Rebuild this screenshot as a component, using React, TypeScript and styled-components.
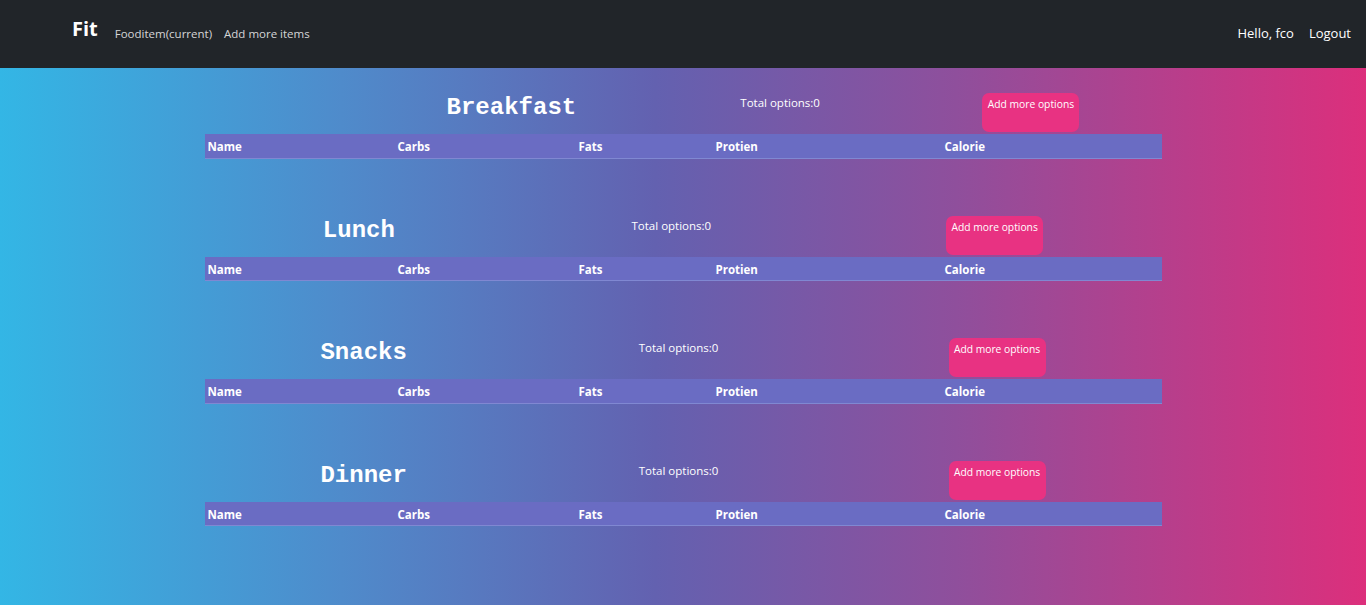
import React from 'react';
import styled, { createGlobalStyle } from 'styled-components';

const GlobalStyle = createGlobalStyle`
  html, body {
    margin: 0;
    padding: 0;
  }
  *, *::before, *::after {
    box-sizing: border-box;
  }
  body {
    font-family: "Open Sans", "Noto Sans", sans-serif;
    color: #fff;
  }
`;

const Page = styled.div`
  min-height: 605px;
  display: flex;
  flex-direction: column;
  background: linear-gradient(to right, #33b6e5 0%, #4f8bcb 25%, #6361b0 48%, #8f4f9c 70%, #dc2f7c 100%);
`;

const NavBar = styled.nav`
  height: 68px;
  background: #212529;
  display: flex;
  align-items: center;
  padding: 0 15px 0 72px;
`;

const Brand = styled.a`
  font-size: 20px;
  font-weight: 700;
  color: #fff;
  margin-right: 17px;
  margin-top: -12px;
`;

const NavLink = styled.a<{ $muted?: boolean }>`
  font-size: ${p => (p.$muted ? '11.5px' : '13px')};
  color: ${p => (p.$muted ? 'rgba(255,255,255,.82)' : '#fff')};
  margin-right: ${p => (p.$muted ? '12px' : '15px')};
  margin-top: -2px;
  &:last-child { margin-right: 0; }
`;

const Spacer = styled.div`
  flex: 1;
`;

const Main = styled.main`
  width: 957px;
  margin: 0 auto;
  padding-top: 25px;
  display: flex;
  flex-direction: column;
  gap: 57px;
`;

const Section = styled.section`
  display: flex;
  flex-direction: column;
`;

const TitleRow = styled.div`
  display: flex;
  justify-content: space-around;
  align-items: flex-start;
  height: 41px;
`;

const MealTitle = styled.h2<{ $shift: number }>`
  margin: 0 0 0 ${p => p.$shift}px;
  font-family: "Liberation Mono", "DejaVu Sans Mono", monospace;
  font-size: 24px;
  font-weight: 700;
  line-height: 29px;
`;

const Total = styled.span`
  font-size: 11.5px;
  line-height: 20px;
  width: 78px;
  white-space: nowrap;
`;

const AddButton = styled.button`
  width: 97px;
  height: 39px;
  border: none;
  border-radius: 7px;
  background: #e83282;
  color: #fff;
  font-family: "Open Sans", "Noto Sans", sans-serif;
  font-size: 10.3px;
  padding: 4px 0 0;
  display: flex;
  justify-content: center;
  align-items: flex-start;
  white-space: nowrap;
`;

const Table = styled.table`
  width: 100%;
  border-collapse: collapse;
  table-layout: fixed;
`;

const HeadRow = styled.tr`
  background: #6a6cc3;
  border-bottom: 1px solid #8088d2;
`;

const Th = styled.th<{ $w: number }>`
  width: ${p => p.$w}px;
  text-align: left;
  font-size: 11.5px;
  font-weight: 700;
  height: 24px;
  padding: 2px 0 0 3px;
  white-space: nowrap;
`;

const columns: [string, number][] = [
  ['Name', 190],
  ['Carbs', 181],
  ['Fats', 137],
  ['Protien', 229],
  ['Calorie', 220],
];

const meals = [
  { name: 'Breakfast', shift: 160 },
  { name: 'Lunch', shift: 0 },
  { name: 'Snacks', shift: 0 },
  { name: 'Dinner', shift: 0 },
];

const MealSection = ({ name, shift }: { name: string; shift: number }) => (
  <Section>
    <TitleRow>
      <MealTitle $shift={shift}>{name}</MealTitle>
      <Total>Total options:0</Total>
      <AddButton>Add more options</AddButton>
    </TitleRow>
    <Table>
      <thead>
        <HeadRow>
          {columns.map(([label, w]) => (
            <Th key={label} $w={w}>{label}</Th>
          ))}
        </HeadRow>
      </thead>
    </Table>
  </Section>
);

export default function App() {
  return (
    <>
      <GlobalStyle />
      <Page>
        <NavBar>
          <Brand>Fit</Brand>
          <NavLink $muted>Fooditem(current)</NavLink>
          <NavLink $muted>Add more items</NavLink>
          <Spacer />
          <NavLink>Hello, fco</NavLink>
          <NavLink>Logout</NavLink>
        </NavBar>
        <Main>
          {meals.map(m => (
            <MealSection key={m.name} name={m.name} shift={m.shift} />
          ))}
        </Main>
      </Page>
    </>
  );
}
